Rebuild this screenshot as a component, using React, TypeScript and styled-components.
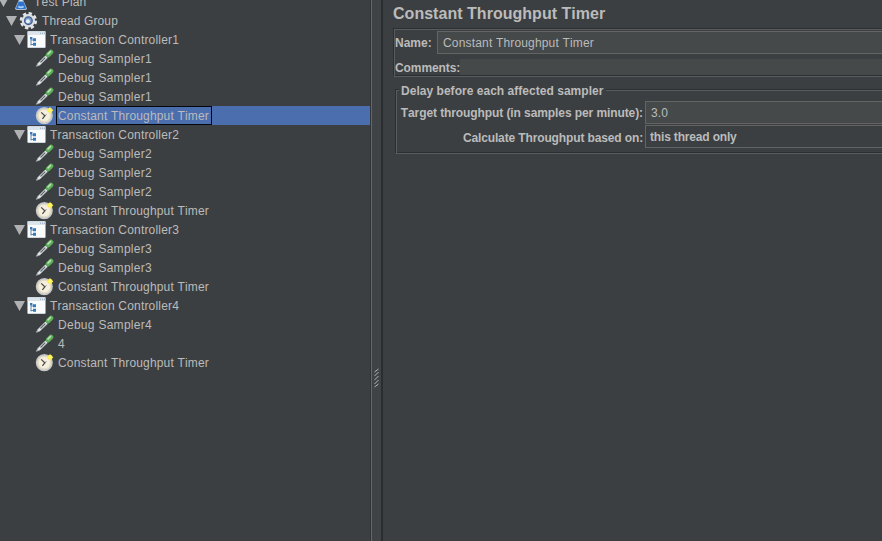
import React from 'react';
import styled, { createGlobalStyle } from 'styled-components';

const GlobalStyle = createGlobalStyle`
  * { box-sizing: border-box; }
  html, body { margin: 0; background: #3c3f41; overflow: hidden; }
  body { font: 12px/19px "Liberation Sans", Arial, sans-serif; color: #bbbbbb; font-kerning: none; }
`;

const Window = styled.div`
  display: flex;
  width: 882px;
  height: 541px;
  overflow: hidden;
  background: #3c3f41;
`;

const TreePane = styled.div`
  flex: none;
  width: 370px;
  overflow: hidden;
`;

const TreeList = styled.div`
  margin-top: -8px;
`;

const indents = [0, 4, 12, 20];

const TreeRow = styled.div<{ $depth: number; $selected?: boolean }>`
  display: flex;
  align-items: center;
  height: 19px;
  padding-left: ${(p) => indents[p.$depth]}px;
  background: ${(p) => (p.$selected ? '#4b6eaf' : 'transparent')};
`;

const Arrow = styled.svg<{ $edge?: boolean }>`
  flex: none;
  display: block;
  width: 15px;
  height: 19px;
  margin-left: ${(p) => (p.$edge ? -4 : 0)}px;
`;

const ArrowGap = styled.span`
  flex: none;
  width: 15px;
`;

const Icon = styled.svg`
  flex: none;
  display: block;
  width: 19px;
  height: 19px;
`;

const NodeLabel = styled.span<{ $selected?: boolean; $spacing: number }>`
  height: 19px;
  line-height: 19px;
  margin-left: 2px;
  padding: 0 2px 0 1px;
  border: 1px solid ${(p) => (p.$selected ? '#05070c' : 'transparent')};
  letter-spacing: ${(p) => p.$spacing}px;
  white-space: nowrap;
`;

const Divider = styled.div`
  flex: none;
  width: 13px;
  height: 541px;
  padding: 368px 0 0 2px;
  border-left: 1px solid #313436;
  border-right: 2px solid #2b2e30;
  box-shadow: inset 1px 0 0 #656869;
  background: #3f4346;
`;

const Grip = styled.svg`
  display: block;
  width: 7px;
  height: 20px;
`;

const Editor = styled.div`
  flex: 1;
  min-width: 0;
  padding-left: 10px;
  overflow: hidden;
  font-weight: bold;
  white-space: nowrap;
`;

const Title = styled.h1`
  margin: 0;
  height: 28px;
  font-size: 16px;
  line-height: 27px;
  letter-spacing: 0.03px;
`;

const Etched = styled.section`
  position: relative;
  width: 520px;
  &::before, &::after {
    content: '';
    position: absolute;
    pointer-events: none;
    border: 1px solid #2c2f31;
    inset: 0 1px 1px 0;
  }
  &::after {
    border-color: #595c5e;
    inset: 1px 0 0 1px;
  }
`;

const NamePanel = styled(Etched)`
  height: 49px;
  padding: 3px 0 0 2px;
`;

const GroupPanel = styled(Etched)`
  display: flow-root;
  height: 65px;
  margin: 12px 0 0 2px;
  padding-left: 5px;
`;

const Legend = styled.div`
  position: relative;
  z-index: 1;
  width: 207px;
  height: 15px;
  margin: -6px 0 0 -1px;
  padding-left: 2px;
  line-height: 16px;
  background: #3c3f41;
  letter-spacing: 0.03px;
`;

const Row = styled.div<{ $height: number }>`
  display: flex;
  align-items: center;
  height: ${(p) => p.$height}px;
`;

const FieldLabel = styled.label<{ $width: number; $right?: boolean; $spacing?: number; $low?: boolean }>`
  flex: none;
  width: ${(p) => p.$width}px;
  padding-right: ${(p) => (p.$right ? 2 : 0)}px;
  line-height: ${(p) => (p.$low ? 18 : 20)}px;
  padding-top: ${(p) => (p.$low ? 2 : 0)}px;
  text-align: ${(p) => (p.$right ? 'right' : 'left')};
  letter-spacing: ${(p) => p.$spacing ?? 0}px;
`;

const Field = styled.div`
  flex: 1;
  height: 23px;
  padding-left: 5px;
  border: 1px solid #646464;
  line-height: 22px;
  background: #45494a;
  font-weight: normal;
  letter-spacing: 0.17px;
`;

const Combo = styled(Field)`
  padding-left: 4px;
  background: #3c3f41;
  font-weight: bold;
  letter-spacing: -0.17px;
`;

const CommentField = styled.div`
  flex: 1;
  height: 16px;
  background: #45494a;
`;

const GearIcon = () => (
  <Icon viewBox="0 0 19 19">
    <circle cx="9.4" cy="9.7" r="7.3" fill="none" stroke="#e2e5e8" strokeWidth="2.8" strokeDasharray="3.3 2.433" />
    <circle cx="9.4" cy="9.7" r="5.2" fill="#7f9fca" stroke="#dce0e4" strokeWidth="3" />
    <circle cx="9.4" cy="9.7" r="3.8" fill="#7d9cc8" stroke="#405f91" strokeWidth="1.3" />
    <circle cx="8.9" cy="10.3" r="2" fill="#e9f0f8" />
  </Icon>
);

const FlaskIcon = () => (
  <Icon viewBox="0 0 19 19">
    <path d="M7.5 2h5M8.3 2v6L4.5 16.5q0 1 1 1h9q1 0 1-1L11.7 8V2z" fill="#dfe9f5" stroke="#b7c5d5" strokeWidth=".8" />
    <path d="M7.6 9.5 5 16q0 .9.8.9h8.4q.8 0 .8-.9L12.4 9.5z" fill="#2f73ce" />
    <path d="M7.3 14.5q2.6 1.8 5.3 0" fill="none" stroke="#a9d0fa" strokeWidth="1.6" />
  </Icon>
);

const ControllerIcon = () => (
  <Icon viewBox="0 0 19 19">
    <rect x=".3" y="1" width="18.4" height="17" rx="1" fill="#c3ced9" />
    <rect x=".7" y="1.5" width="17.6" height="3.7" fill="#dce4ec" />
    <path d="M13 3.2h1M15 3.2h1M17 3.2h1" stroke="#8ba2bb" />
    <rect x="1" y="5" width="17" height="12.2" fill="#fafbfc" />
    <path d="M4 7v8.5M4 10h3M4 14.5h3" fill="none" stroke="#6184ac" />
    <path d="M3 7h2.4v2.3H3zM6 8.2h3v3H6zM6 12.8h3v3H6z" fill="#347abd" />
  </Icon>
);

const SamplerIcon = () => (
  <Icon viewBox="0 0 19 19">
    <path d="M1.4 17.3 3 14.2 11.2 6 13.3 8 5 16z" fill="#e5eaeb" stroke="#a3adb0" strokeWidth=".8" />
    <path d="m5.5 13.5 4.8-4.8" stroke="#596267" strokeWidth="1.1" />
    <path d="m10.4 5.2 4 3.9" stroke="#25452a" strokeWidth="1.8" strokeLinecap="round" />
    <path d="m13.2 5.9 2.8-2.8" stroke="#5fae5c" strokeWidth="4.8" strokeLinecap="round" />
    <path d="m13.1 4.8 2.4-2.3" stroke="#bbe4b4" strokeWidth="1.7" strokeLinecap="round" />
  </Icon>
);

const TimerIcon = () => (
  <Icon viewBox="0 0 19 19">
    <circle cx="9.3" cy="9.6" r="7.7" fill="#f4efdf" stroke="#c6c8ca" strokeWidth="1.7" />
    <circle cx="9.3" cy="9.6" r="6.2" fill="none" stroke="#ded3b2" strokeWidth=".8" />
    <path d="m6.2 6.4 3.6 3.4-2.4 3" fill="none" stroke="#494947" strokeWidth="1.3" />
    <path d="m9.8 9.8 1.6-1.2" stroke="#777262" />
    <circle cx="15" cy="4.3" r="2.5" fill="#f3e63e" />
    <path d="m15 .8 1 2.4 2.5 1.1L16 5.4l-1 2.5-1.1-2.5-2.4-1.1 2.4-1.1z" fill="#fff567" />
  </Icon>
);

type Kind = 'plan' | 'group' | 'controller' | 'sampler' | 'timer';
const icons: Record<Kind, React.FC> = {
  plan: FlaskIcon, group: GearIcon, controller: ControllerIcon, sampler: SamplerIcon, timer: TimerIcon,
};
const spacing: Record<Kind, number> = { plan: 0.2, group: 0.1, controller: 0.19, sampler: 0.28, timer: 0.17 };
const depths: Record<Kind, number> = { plan: 0, group: 1, controller: 2, sampler: 3, timer: 3 };

const nodes: { kind: Kind; text: string; selected?: boolean }[] = [
  { kind: 'plan', text: 'Test Plan' },
  { kind: 'group', text: 'Thread Group' },
  { kind: 'controller', text: 'Transaction Controller1' },
  { kind: 'sampler', text: 'Debug Sampler1' },
  { kind: 'sampler', text: 'Debug Sampler1' },
  { kind: 'sampler', text: 'Debug Sampler1' },
  { kind: 'timer', text: 'Constant Throughput Timer', selected: true },
  { kind: 'controller', text: 'Transaction Controller2' },
  { kind: 'sampler', text: 'Debug Sampler2' },
  { kind: 'sampler', text: 'Debug Sampler2' },
  { kind: 'sampler', text: 'Debug Sampler2' },
  { kind: 'timer', text: 'Constant Throughput Timer' },
  { kind: 'controller', text: 'Transaction Controller3' },
  { kind: 'sampler', text: 'Debug Sampler3' },
  { kind: 'sampler', text: 'Debug Sampler3' },
  { kind: 'timer', text: 'Constant Throughput Timer' },
  { kind: 'controller', text: 'Transaction Controller4' },
  { kind: 'sampler', text: 'Debug Sampler4' },
  { kind: 'sampler', text: '4' },
  { kind: 'timer', text: 'Constant Throughput Timer' },
];

export default function App() {
  return (
    <>
      <GlobalStyle />
      <Window>
        <TreePane>
          <TreeList>
            {nodes.map((n, i) => {
              const NodeIcon = icons[n.kind];
              return (
                <TreeRow key={i} $depth={depths[n.kind]} $selected={n.selected}>
                  {depths[n.kind] < 3 ? (
                    <Arrow viewBox="0 0 15 19" $edge={n.kind === 'plan'}>
                      <path d="M2 5h11L7.5 15z" fill="#b0b1b2" />
                    </Arrow>
                  ) : <ArrowGap />}
                  <NodeIcon />
                  <NodeLabel $selected={n.selected} $spacing={spacing[n.kind]}>{n.text}</NodeLabel>
                </TreeRow>
              );
            })}
          </TreeList>
        </TreePane>
        <Divider>
          <Grip viewBox="0 0 7 20">
            <path d="m1.5 4 4-3M1.5 8l4-4M1.5 12l4-4M1.5 16l4-4M1.5 19l4-3" stroke="#b4b6b7" strokeWidth="1" />
          </Grip>
        </Divider>
        <Editor>
          <Title>Constant Throughput Timer</Title>
          <NamePanel>
            <Row $height={23}>
              <FieldLabel $width={42}>Name:</FieldLabel>
              <Field>Constant Throughput Timer</Field>
            </Row>
            <Row $height={26}>
              <FieldLabel $width={65} $spacing={-0.08} $low>Comments:</FieldLabel>
              <CommentField />
            </Row>
          </NamePanel>
          <GroupPanel>
            <Legend>Delay before each affected sampler</Legend>
            <Row $height={29}>
              <FieldLabel $width={245} $right $spacing={-0.09}>Target throughput (in samples per minute):</FieldLabel>
              <Field>3.0</Field>
            </Row>
            <Row $height={19}>
              <FieldLabel $width={245} $right $spacing={-0.13} $low>Calculate Throughput based on:</FieldLabel>
              <Combo>this thread only</Combo>
            </Row>
          </GroupPanel>
        </Editor>
      </Window>
    </>
  );
}
